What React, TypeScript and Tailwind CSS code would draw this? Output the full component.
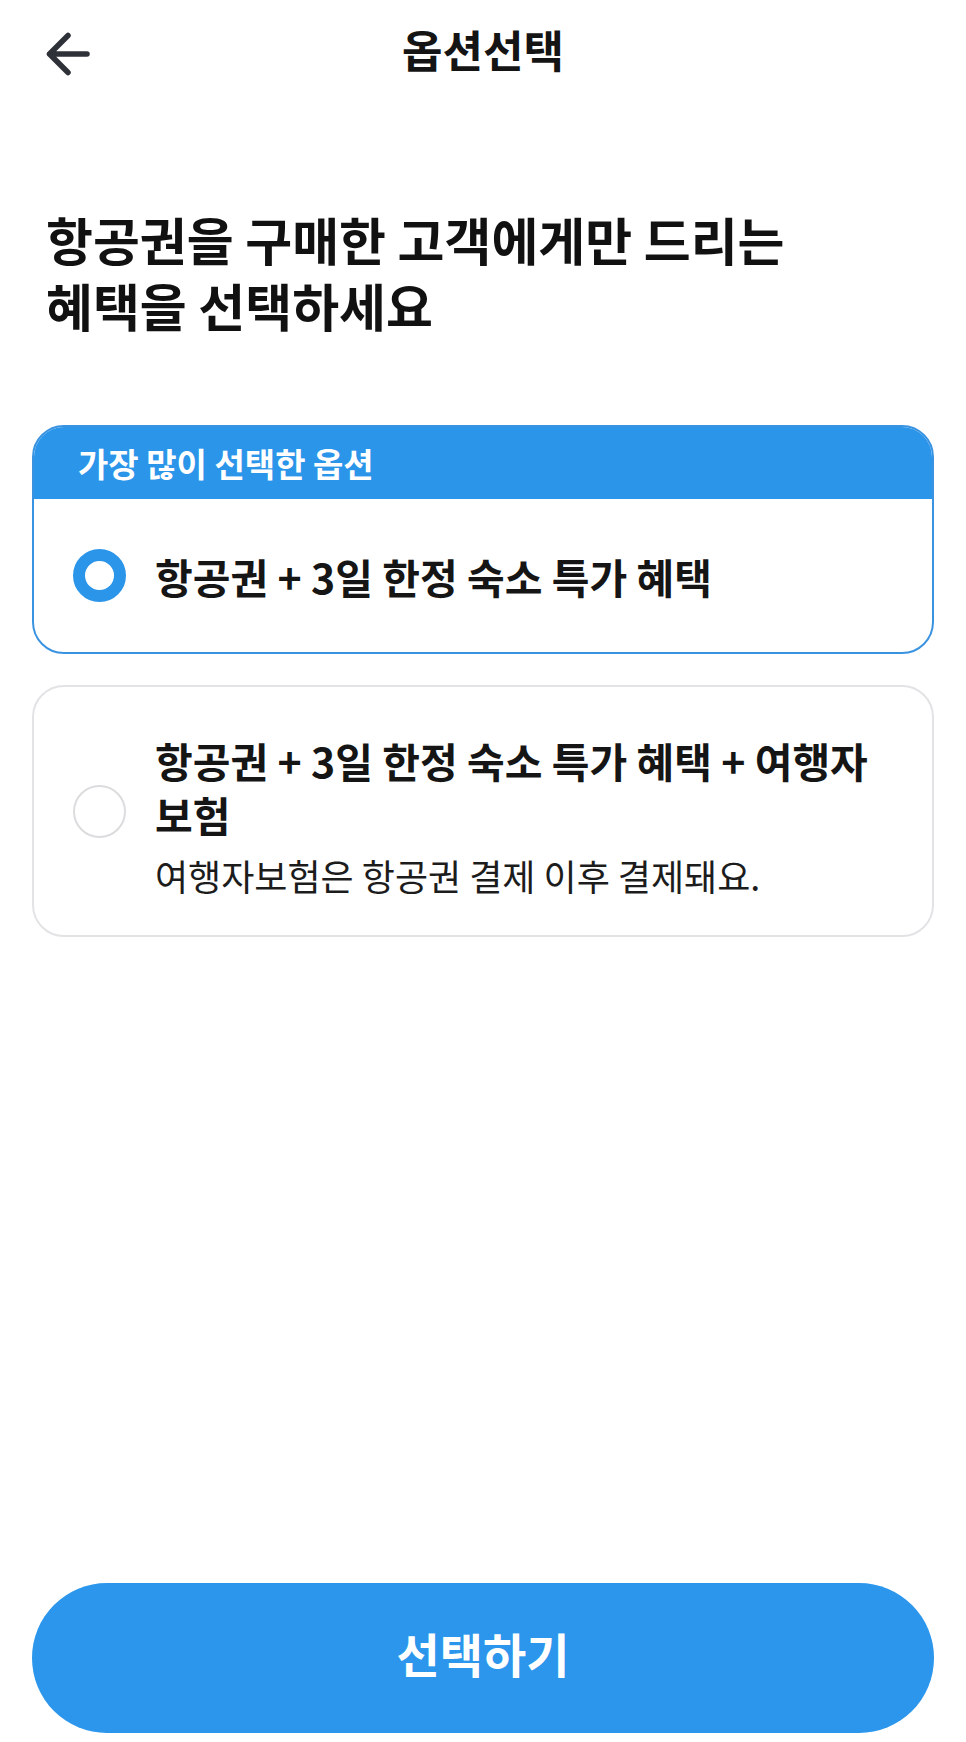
import React from "react";

const FONT = { fontFamily: '"Noto Sans CJK KR", "Noto Sans", sans-serif' };

function BackArrow() {
  return (
    <svg width="48" height="48" viewBox="0 0 48 48" fill="none" aria-hidden>
      <path
        d="M23 5.5 L4.5 24 L23 42.5 M4.5 24 H42"
        stroke="#2e3138"
        strokeWidth="5.5"
        strokeLinecap="round"
        strokeLinejoin="round"
      />
    </svg>
  );
}

export default function App() {
  return (
    <div
      className="min-h-[1742px] w-[966px] bg-white flex flex-col text-[#111111]"
      style={FONT}
    >
      {/* top bar */}
      <div className="h-[104px] grid grid-cols-[1fr_auto_1fr] items-center px-[45px]">
        <div className="flex items-center pt-[4px]">
          <BackArrow />
        </div>
        <div className="text-[44px] leading-[60px] font-bold text-[#141414] pb-[6px]">옵션선택</div>
        <div />
      </div>

      {/* heading */}
      <h1 className="mt-[102px] px-[46px] text-[51px] leading-[66px] font-bold text-[#111111]">
        <span className="block">항공권을 구매한 고객에게만 드리는</span>
        <span className="block">혜택을 선택하세요</span>
      </h1>

      {/* options */}
      <div className="mt-[87px] px-[32px] flex flex-col gap-[31px]">
        {/* selected */}
        <div className="rounded-[32px] border-2 border-[#3a93e0] overflow-hidden">
          <div className="h-[72px] bg-[#2b95ea] flex items-center pl-[44px]">
            <span className="text-white text-[33px] leading-[44px] font-bold">
              가장 많이 선택한 옵션
            </span>
          </div>
          <div className="h-[153px] flex items-center pl-[39px] pr-[32px] gap-[29px]">
            <div className="w-[53px] h-[53px] shrink-0 rounded-full border-[12px] border-[#2b95ea] bg-white" />
            <div className="text-[41px] leading-[54px] font-bold text-[#151515]">
              항공권 + 3일 한정 숙소 특가 혜택
            </div>
          </div>
        </div>

        {/* unselected */}
        <div className="rounded-[32px] border-2 border-[#e3e3e6] h-[252px] flex items-center pl-[39px] pr-[30px] gap-[29px]">
          <div className="w-[53px] h-[53px] shrink-0 rounded-full border-2 border-[#dcdcdf] bg-white" />
          <div className="flex flex-col pt-[10px]">
            <div className="text-[41px] leading-[54px] font-bold text-[#151515]">
              항공권 + 3일 한정 숙소 특가 혜택 + 여행자 보험
            </div>
            <div className="mt-[9px] text-[36px] leading-[50px] text-[#1c1c1c]">
              여행자보험은 항공권 결제 이후 결제돼요.
            </div>
          </div>
        </div>
      </div>

      <div className="flex-1" />

      {/* CTA */}
      <div className="px-[32px] pb-[9px]">
        <button className="w-full h-[150px] rounded-full bg-[#2b96eb] text-white text-[47px] font-bold leading-[60px] pb-[10px]">
          선택하기
        </button>
      </div>
    </div>
  );
}
